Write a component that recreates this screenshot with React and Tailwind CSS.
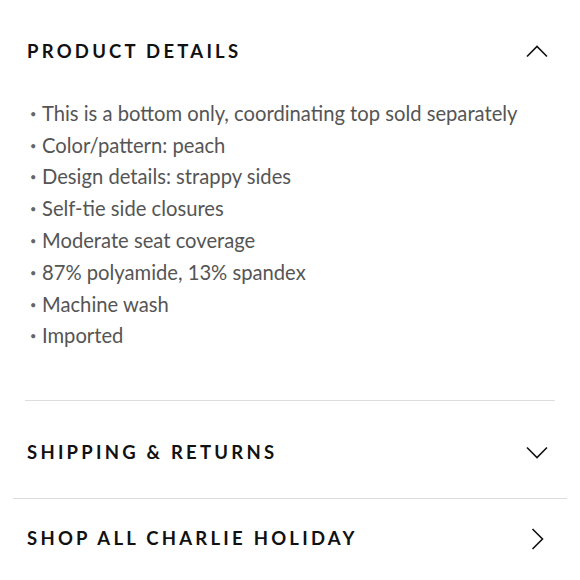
import React from 'react';

const details = [
  'This is a bottom only, coordinating top sold separately',
  'Color/pattern: peach',
  'Design details: strappy sides',
  'Self-tie side closures',
  'Moderate seat coverage',
  '87% polyamide, 13% spandex',
  'Machine wash',
  'Imported',
];

function Chevron({ dir }) {
  const d = {
    up: 'M1 11 L11 1 L21 11',
    down: 'M1 1 L11 11 L21 1',
    right: 'M1 1 L11 11 L1 21',
  }[dir];
  const size = dir === 'right' ? 'w-[13px] h-[22px]' : 'w-[22px] h-[13px]';
  const vb = dir === 'right' ? '0 0 12 22' : '0 0 22 12';
  return (
    <svg viewBox={vb} className={size} fill="none" stroke="#111" strokeWidth="1.6">
      <path d={d} />
    </svg>
  );
}

const heading = 'text-[18.5px] font-bold uppercase tracking-[0.175em] text-[#111]';

export default function App() {
  return (
    <div className="w-[580px] h-[580px] bg-white overflow-hidden font-['Lato',sans-serif]">
      <div className="px-[25px]">
        <div className="flex items-center justify-between pt-[38px] pr-[7px]">
          <h2 className={`${heading} pl-[2px]`}>Product Details</h2>
          <Chevron dir="up" />
        </div>
        <ul className="mt-[32px] pl-[5px] text-[20.2px] leading-[31.8px] text-[#555]">
          {details.map((t) => (
            <li key={t} className="flex items-center">
              <span className="w-[12px] text-[11px] text-[#666]">•</span>
              <span>{t}</span>
            </li>
          ))}
        </ul>
        <div className="mt-[48px] border-t border-[#ddd]" />
        <div className="flex items-center justify-between h-[97px] pt-[6px] pr-[7px]">
          <h2 className={`${heading} pl-[2px]`}>Shipping &amp; Returns</h2>
          <Chevron dir="down" />
        </div>
      </div>
      <div className="mx-[13px] border-t border-[#ddd]" />
      <div className="flex items-center justify-between h-[80px] pl-[27px] pr-[36px]">
        <h2 className={heading}>Shop All Charlie Holiday</h2>
        <Chevron dir="right" />
      </div>
    </div>
  );
}
